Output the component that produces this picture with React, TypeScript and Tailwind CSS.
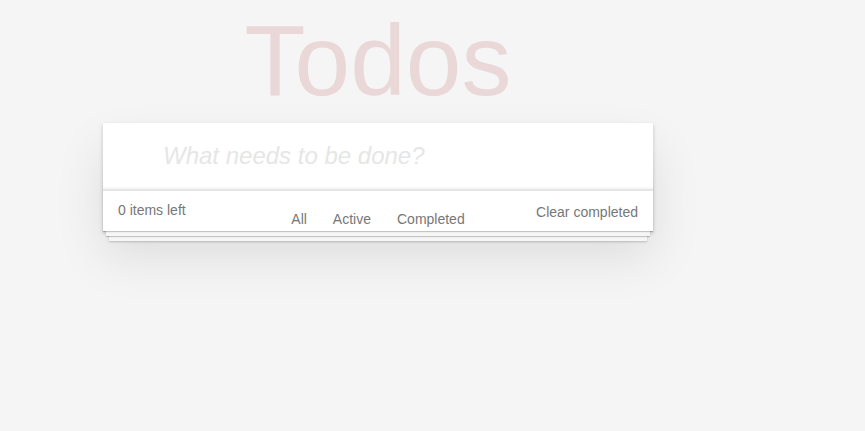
import { useState } from "react";

const FILTERS = ["All", "Active", "Completed"];

export default function App() {
  const [text, setText] = useState("");

  return (
    <div
      className="min-h-screen bg-[#f5f5f5] text-[14px] leading-[1.4em] text-[#111]"
      style={{ fontFamily: '"Liberation Sans", Arial, Helvetica, sans-serif' }}
    >
      <div className="w-[550px] ml-[103px]">
        {/* Title */}
        <h1 className="pt-[10px] h-[123px] text-center text-[100px] leading-[100px] font-normal text-[rgba(175,47,47,0.15)]">
          Todos
        </h1>

        {/* App card */}
        <section className="bg-white shadow-[0_2px_4px_0_rgba(0,0,0,0.2),0_25px_50px_0_rgba(0,0,0,0.1)]">
          <header>
            <input
              value={text}
              onChange={(e) => setText(e.target.value)}
              placeholder="What needs to be done?"
              className="block w-full h-[65.6px] pt-4 pb-4 pl-[60px] pr-4 text-[24px] leading-[1.4em] bg-transparent outline-none shadow-[inset_0_-2px_1px_rgba(0,0,0,0.03)] placeholder:italic placeholder:text-[#e6e6e6]"
            />
          </header>

          {/* Footer */}
          <footer className="relative border-t-2 border-[#e6e6e6] px-[15px] pt-[9px] pb-[11px] h-[42px] text-[#777]">
            <div className="absolute left-0 right-0 bottom-0 h-[50px] overflow-hidden pointer-events-none shadow-[0_1px_1px_rgba(0,0,0,0.2),0_8px_0_-3px_#f6f6f6,0_9px_1px_-3px_rgba(0,0,0,0.2),0_16px_0_-6px_#f6f6f6,0_17px_2px_-6px_rgba(0,0,0,0.2)]" />
            <div className="relative grid grid-cols-[1fr_auto_1fr] items-start">
              <span className="leading-[20px]">0 items left</span>
              <ul className="flex pt-[9px]">
                {FILTERS.map((f) => (
                  <li key={f}>
                    <a className="block mx-[5px] px-[8px] leading-[20px] cursor-pointer">{f}</a>
                  </li>
                ))}
              </ul>
              <button className="justify-self-end leading-[20px] pt-[2px] cursor-pointer">
                Clear completed
              </button>
            </div>
          </footer>
        </section>
      </div>
    </div>
  );
}
